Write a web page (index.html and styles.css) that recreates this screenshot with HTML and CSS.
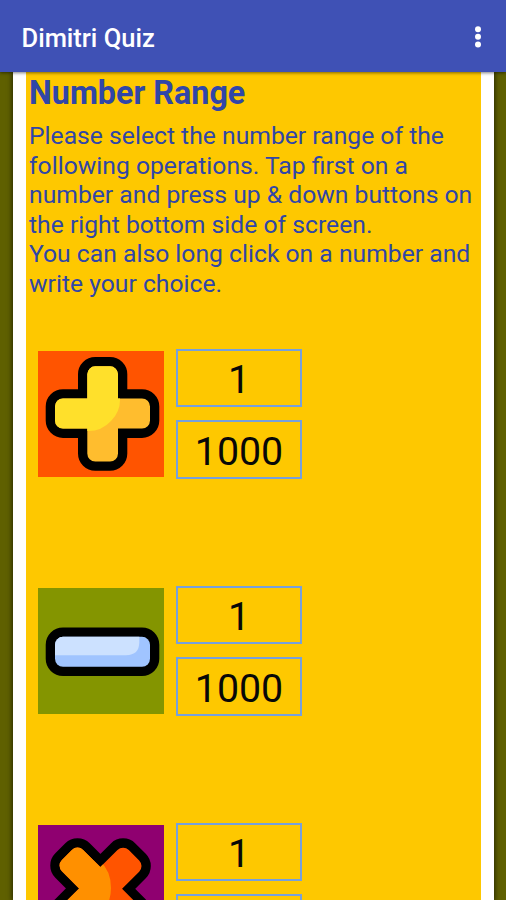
FILE: index.html
```html
<!DOCTYPE html>
<html lang="en">
<head>
<meta charset="utf-8">
<title>Dimitri Quiz</title>
<link rel="stylesheet" href="styles.css">
</head>
<body>
<header class="bar">
  <h1 class="bar-title">Dimitri Quiz</h1>
  <svg class="more" viewBox="0 0 8 24" width="8" height="24" role="img" aria-label="More options"><circle cx="4" cy="4.2" r="3"/><circle cx="4" cy="11.8" r="3"/><circle cx="4" cy="19.4" r="3"/></svg>
</header>
<main class="card">
  <h2 class="heading">Number Range</h2>
  <p class="intro">Please select the number range of the<br>following operations. Tap first on a<br>number and press up &amp; down buttons on<br>the right bottom side of screen.<br>You can also long click on a number and<br>write your choice.</p>
  <section class="operation">
    <svg class="tile tile-plus" viewBox="0 0 126 126" width="126" height="126">
      <defs>
        <path id="cross" d="M57.3 15.3H72a8 8 0 0 1 8 8V47.5H104a8 8 0 0 1 8 8V69.6a8 8 0 0 1-8 8H80V102.5a8 8 0 0 1-8 8H57.3a8 8 0 0 1-8-8V77.6H25a8 8 0 0 1-8-8V55.5a8 8 0 0 1 8-8H49.3V23.3a8 8 0 0 1 8-8Z"/>
        <clipPath id="cross-clip"><use href="#cross"/></clipPath>
      </defs>
      <use href="#cross" class="outline"/>
      <g clip-path="url(#cross-clip)">
        <path fill="#ffbd2e" d="M0 0H126V126H0Z"/>
        <path fill="#ffe02b" d="M0 0H82V49Q82 61 73 70Q64 80 50 80H0Z"/>
      </g>
    </svg>
    <div class="range"><div class="field">1</div><div class="field">1000</div></div>
  </section>
  <section class="operation">
    <svg class="tile tile-minus" viewBox="0 0 126 126" width="126" height="126">
      <defs><clipPath id="dash-clip"><rect x="17" y="48.8" width="95" height="30" rx="8"/></clipPath></defs>
      <rect class="outline" x="17" y="48.8" width="95" height="30" rx="8"/>
      <g clip-path="url(#dash-clip)">
        <path fill="#a0c4ff" d="M0 0H126V126H0Z"/>
        <path fill="#cce1ff" d="M0 0H101.3V54Q101.3 67.2 88 67.2H0Z"/>
      </g>
    </svg>
    <div class="range"><div class="field">1</div><div class="field">1000</div></div>
  </section>
  <section class="operation">
    <svg class="tile tile-times" viewBox="0 0 126 126" width="126" height="126">
      <defs><clipPath id="times-clip"><use href="#cross" transform="translate(-2.1 1) rotate(45 64.6 62.6)"/></clipPath></defs>
      <use href="#cross" class="outline" transform="translate(-2.1 1) rotate(45 64.6 62.6)"/>
      <g clip-path="url(#times-clip)">
        <path fill="#ff5400" d="M0 0H126V126H0Z"/>
        <path fill="#ff9000" d="M0 0H62V36Q73 46 73 63Q73 79 62 90V126H0Z"/>
      </g>
    </svg>
    <div class="range"><div class="field">1</div><div class="field"></div></div>
  </section>
</main>
</body>
</html>
```
FILE: styles.css
```css
* { box-sizing: border-box; }

html, body { height: 100%; }

body {
  margin: 0;
  overflow: hidden;
  display: flex;
  flex-direction: column;
  background: #5f6000;
  font-family: Roboto, "Liberation Sans", sans-serif;
}

.bar {
  position: relative;
  z-index: 1;
  flex: none;
  height: 72px;
  padding: 2px 24px 0 21.5px;
  display: flex;
  align-items: center;
  justify-content: space-between;
  background: #3f51b5;
  color: #fff;
  box-shadow: 0 1px 3px rgba(0, 0, 0, .5);
}

.bar-title {
  margin: 1px 0 0;
  font-size: 25.5px;
  line-height: 30px;
  font-weight: 500;
}

.more { fill: #fff; }

.card {
  flex: none;
  height: 828px;
  overflow: hidden;
  margin: 0 12px 0 13px;
  padding: 0 0 0 3px;
  border: solid #fff;
  border-width: 0 13px;
  background: #fec800;
  box-shadow: 0 0 5px 1px rgba(0, 0, 0, .6);
  color: #3046a8;
}

.heading {
  margin: 0;
  padding-top: 2px;
  font-size: 32.3px;
  line-height: 38px;
  font-weight: 700;
}

.intro {
  margin: 9px 0 0;
  height: 177px;
  font-size: 24.7px;
  line-height: 29.6px;
  white-space: nowrap;
}

.operation {
  display: flex;
  align-items: flex-start;
  gap: 12px;
  height: 130px;
  margin: 50.5px 0 0 9px;
}

.operation + .operation { margin-top: 107px; }

.tile { flex: none; margin-top: 2px; }
.tile-plus { background: #ff5400; }
.tile-minus { background: #849500; }
.tile-times { background: #8f0070; }

.outline {
  fill: #000;
  stroke: #000;
  stroke-width: 18.6;
  stroke-linejoin: round;
}

.range {
  display: grid;
  gap: 13px;
}

.field {
  width: 126px;
  height: 58.5px;
  padding-top: 1.5px;
  border: 2px solid #76a0dc;
  color: #080808;
  font-size: 39.3px;
  line-height: 56px;
  text-align: center;
}
```
